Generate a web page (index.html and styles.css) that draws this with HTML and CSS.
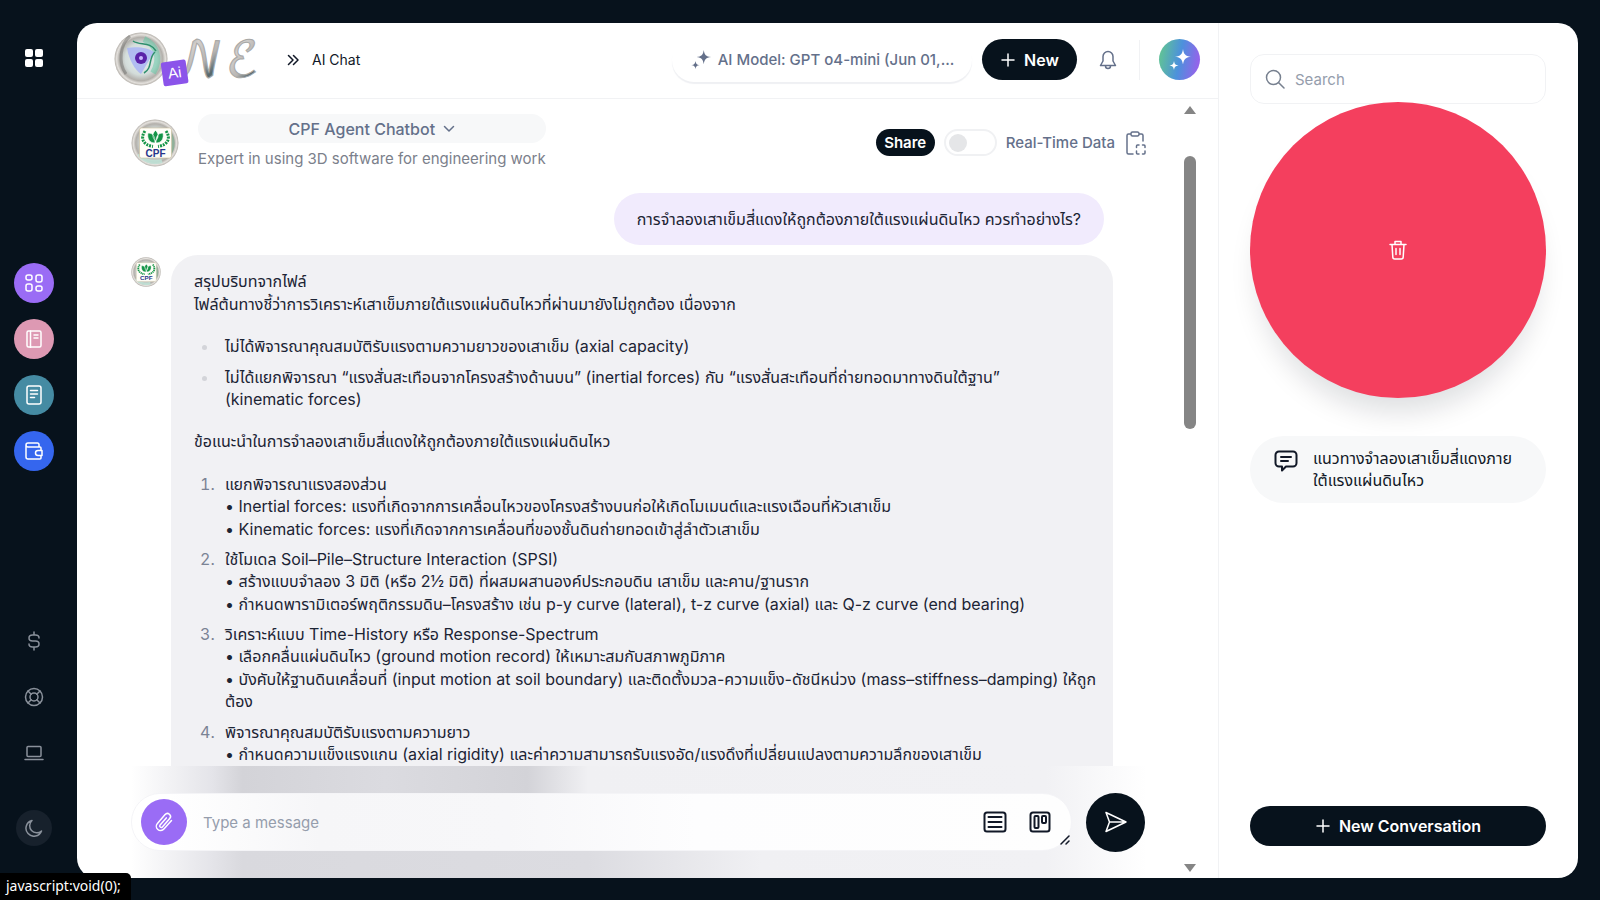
FILE: index.html
```html
<!DOCTYPE html>
<html lang="th">
<head>
<meta charset="utf-8">
<meta name="viewport" content="width=device-width, initial-scale=1">
<title>AI Chat</title>
<link rel="stylesheet" href="styles.css">
</head>
<body>
<svg class="defs" width="0" height="0" aria-hidden="true">
  <defs>
    <radialGradient id="pearl" cx="50%" cy="50%" r="50%">
      <stop offset="0" stop-color="#e9f4f0"/><stop offset=".6" stop-color="#d3dcda"/>
      <stop offset=".82" stop-color="#b3b0ab"/><stop offset=".92" stop-color="#e4e1dd"/><stop offset="1" stop-color="#b4b0aa"/>
    </radialGradient>
    <linearGradient id="silver" x1="0" y1="0" x2="1" y2="1">
      <stop offset="0" stop-color="#5f6d70"/><stop offset=".3" stop-color="#d3cfcc"/>
      <stop offset=".55" stop-color="#b9b6b3"/><stop offset=".75" stop-color="#56676b"/><stop offset="1" stop-color="#b9bcbb"/>
    </linearGradient>
    <symbol id="plus" viewBox="0 0 16 16"><path d="M8 2v12M2 8h12"/></symbol>
    <symbol id="sparkles" viewBox="0 0 24 24"><path fill="currentColor" stroke="none" d="M15 1c.9 5.500 2.200 6.900 8 7.800-5.800.9-7.100 2.300-8 7.800-.9-5.500-2.200-6.900-8-7.800 5.800-.9 7.100-2.300 8-7.800zM6 13c.6 3.200 1.400 4 4.600 4.500C7.400 18 6.600 18.800 6 22c-.6-3.200-1.400-4-4.600-4.500C4.600 17 5.400 16.200 6 13z"/></symbol>
    <symbol id="cpf" viewBox="0 0 48 48">
      <circle cx="24" cy="24" r="23.500" fill="url(#pearl)"/>
      <path d="M38 12c5 7 6 17 0 24" fill="none" stroke="#7fae8e" stroke-width="3" opacity=".7"/>
      <path d="M8 35c4 6 13 10 23 7" fill="none" stroke="#bfe6da" stroke-width="4" opacity=".8"/>
      <rect x="8.500" y="9" width="32" height="30" rx="2" fill="#fffef8" stroke="#c9bd9b" stroke-width=".6"/>
      <path d="M24.500 11.500c3.500 3 3.500 7 0 10.500-3.500-3.500-3.500-7.500 0-10.500zM17 14c5 0 7 3 7 10-6 0-8-5-7-10zM32 14c-5 0-7 3-7 10 6 0 8-5 7-10z" fill="#149447" stroke="#fff" stroke-width=".6"/>
      <path d="M14 12c-5 7-2 14 8 15.500M35 12c5 7 2 14-8 15.500" fill="none" stroke="#149447" stroke-width="3" stroke-dasharray="2 1"/>
      <text x="24.500" y="37.500" text-anchor="middle" class="cpf-text">CPF</text>
    </symbol>
  </defs>
</svg>

<div class="app">
  <nav class="rail" aria-label="Main">
    <button class="rail-btn apps" aria-label="Apps"><svg width="18" height="18" viewBox="0 0 18 18" fill="#fff"><rect width="8" height="8" rx="2"/><rect x="10" width="8" height="8" rx="2"/><rect y="10" width="8" height="8" rx="2"/><rect x="10" y="10" width="8" height="8" rx="2"/></svg></button>
    <div class="rail-group">
      <button class="rail-btn round violet" aria-label="Dashboard"><svg class="ico" width="18" height="18" viewBox="0 0 18 18"><rect x="1" y="1" width="6" height="5" rx="2"/><rect x="11" y="1" width="6" height="7" rx="2"/><rect x="1" y="10" width="6" height="7" rx="2"/><rect x="11" y="12" width="6" height="5" rx="2"/></svg></button>
      <button class="rail-btn round pink" aria-label="Notebook"><svg class="ico" width="18" height="18" viewBox="0 0 18 18"><rect x="2" y="1" width="14" height="16" rx="1.500"/><path d="M5.500 1v17M9 5h4M9 8h4"/></svg></button>
      <button class="rail-btn round teal" aria-label="Documents"><svg class="ico" width="18" height="20" viewBox="0 0 18 20"><rect x="2" y="1" width="14" height="18" rx="2"/><path d="M5.500 5.500h7M5.500 9h7M5.500 12.500h4"/></svg></button>
      <button class="rail-btn round blue" aria-label="Wallet"><svg class="ico" width="18" height="18" viewBox="0 0 18 18"><path d="M14 5V2.500A1.500 1.500 0 0 0 12.500 1H3a2 2 0 0 0 0 4h12a1 1 0 0 1 1 1v2.500M1 3v12a2 2 0 0 0 2 2h12a1 1 0 0 0 1-1v-2.500M17 8.500h-4a2.500 2.500 0 0 0 0 5h4z"/></svg></button>
    </div>
    <div class="rail-foot">
      <button class="rail-btn" aria-label="Pricing"><svg class="ico" width="20" height="20" viewBox="0 0 20 20"><path d="M10 1v3M10 16v3M15 7c0-2-1.500-3-3.500-3h-3C6.500 4 5 5 5 7s1.500 3 3.500 3h3c2 0 3.500 1 3.500 3s-1.500 3-3.500 3h-3C6.500 16 5 15 5 13"/></svg></button>
      <button class="rail-btn" aria-label="Support"><svg class="ico" width="20" height="20" viewBox="0 0 20 20"><circle cx="10" cy="10" r="8.500"/><circle cx="10" cy="10" r="4"/><path d="M4 4l3.200 3.200M16 4l-3.200 3.200M4 16l3.200-3.200M16 16l-3.200-3.200"/></svg></button>
      <button class="rail-btn" aria-label="Devices"><svg class="ico" width="20" height="20" viewBox="0 0 20 20"><rect x="3" y="3.500" width="14" height="10" rx="1"/><path d="M1 16.500h18"/></svg></button>
      <button class="rail-btn moon" aria-label="Dark mode"><svg class="ico" width="18" height="18" viewBox="0 0 18 18"><path d="M7 1.500A8 8 0 1 0 16.500 12 7 7 0 0 1 7 1.500z"/></svg></button>
    </div>
  </nav>

  <div class="panel">
    <div class="workspace">
      <header class="topbar">
        <a class="logo" href="#" aria-label="ONE Ai">
          <svg width="146" height="58" viewBox="0 0 146 58">
            <circle cx="28" cy="28" r="26.500" fill="url(#pearl)"/>
            <path d="M17 5c-10 8-12 27-4 38" fill="none" stroke="#6f706d" stroke-width="3" opacity=".5"/>
            <path d="M31 8c12 6 18 19 9 34" fill="none" stroke="#52c79f" stroke-width="6" opacity=".45"/>
            <path d="M14 17c10-2 22 0 27 4L28 43c-6-4-12-14-14-26z" fill="#a9b5f3" opacity=".85"/>
            <path d="M20 10c7 5 17 0 23 10M31 42c9-5 4-15 11-21" fill="none" stroke="#2e8f6d" stroke-width="1.500"/>
            <circle cx="28" cy="27" r="6" fill="#5a22a8"/><circle cx="28" cy="27" r="2" fill="#c9b6ff"/>
            <text x="57" y="45" class="logo-script">𝒩</text>
            <text x="113" y="45" class="logo-script">ℰ</text>
            <g transform="rotate(-8 61 41)"><rect x="49" y="30" width="25" height="24" rx="2" fill="#8b54ea"/><text x="61.500" y="47" text-anchor="middle" class="logo-ai">Ai</text></g>
          </svg>
        </a>
        <div class="crumb"><svg class="ico" width="12" height="12" viewBox="0 0 12 12"><path d="M1.500 1.500L6 6l-4.500 4.500M6.500 1.500L11 6l-4.500 4.500"/></svg><span>AI Chat</span></div>
        <div class="top-actions">
          <button class="model"><svg width="22" height="22"><use href="#sparkles"/></svg><span>AI Model: GPT o4-mini (Jun 01,...</span></button>
          <button class="dark new"><svg class="ico" width="16" height="16"><use href="#plus"/></svg>New</button>
          <button class="bell" aria-label="Notifications"><svg class="ico" width="18" height="20" viewBox="0 0 18 20"><path d="M9 1.500a5 5 0 0 0-5 5V11l-2.500 4.500h15L14 11V6.500a5 5 0 0 0-5-5zM6.500 16a2.500 2.500 0 0 0 5 0"/></svg></button>
          <button class="avatar" aria-label="Account"><svg width="24" height="24"><use href="#sparkles"/></svg></button>
        </div>
      </header>

      <div class="body">
        <main class="chat">
          <div class="agent">
            <svg class="agent-logo" width="48" height="48" role="img" aria-label="CPF"><use href="#cpf"/></svg>
            <div class="agent-info">
              <button class="agent-pick">CPF Agent Chatbot<svg class="ico" width="12" height="8" viewBox="0 0 12 8"><path d="M1.500 1.500L6 6l4.500-4.500"/></svg></button>
              <p class="agent-desc">Expert in using 3D software for engineering work</p>
            </div>
            <div class="agent-tools">
              <button class="dark share">Share</button>
              <label class="switch"><input type="checkbox" class="toggle"><span>Real-Time Data</span></label>
              <button class="clip" aria-label="Copy"><svg class="ico" width="22" height="26" viewBox="0 0 22 26"><path d="M6 4H3.500A1.500 1.500 0 0 0 2 5.500v17A1.500 1.500 0 0 0 3.500 24H8M14 4h2.500A1.500 1.500 0 0 1 18 5.500V11M6 3.500A1.500 1.500 0 0 1 7.500 2h5A1.500 1.500 0 0 1 14 3.500v1A1.500 1.500 0 0 1 12.500 6h-5A1.500 1.500 0 0 1 6 4.500z"/><path d="M11.500 17.500V16a1 1 0 0 1 1-1H14M17.500 15H19a1 1 0 0 1 1 1v1.500M20 21v2a1 1 0 0 1-1 1h-1.500M14 24h-1.500a1 1 0 0 1-1-1v-2"/></svg></button>
            </div>
          </div>

          <div class="messages">
            <div class="from-user">การจำลองเสาเข็มสี่แดงให้ถูกต้องภายใต้แรงแผ่นดินไหว ควรทำอย่างไร?</div>
            <div class="from-bot">
              <svg class="bot-logo" width="30" height="32" role="img" aria-label="CPF"><use href="#cpf"/></svg>
              <div class="bubble">
                <p>สรุปบริบทจากไฟล์<br>ไฟล์ต้นทางชี้ว่าการวิเคราะห์เสาเข็มภายใต้แรงแผ่นดินไหวที่ผ่านมายังไม่ถูกต้อง เนื่องจาก</p>
                <ul>
                  <li>ไม่ได้พิจารณาคุณสมบัติรับแรงตามความยาวของเสาเข็ม (axial capacity)</li>
                  <li>ไม่ได้แยกพิจารณา “แรงสั่นสะเทือนจากโครงสร้างด้านบน” (inertial forces) กับ “แรงสั่นสะเทือนที่ถ่ายทอดมาทางดินใต้ฐาน”<br>(kinematic forces)</li>
                </ul>
                <p>ข้อแนะนำในการจำลองเสาเข็มสี่แดงให้ถูกต้องภายใต้แรงแผ่นดินไหว</p>
                <ol>
                  <li>แยกพิจารณาแรงสองส่วน<br>• Inertial forces: แรงที่เกิดจากการเคลื่อนไหวของโครงสร้างบนก่อให้เกิดโมเมนต์และแรงเฉือนที่หัวเสาเข็ม<br>• Kinematic forces: แรงที่เกิดจากการเคลื่อนที่ของชั้นดินถ่ายทอดเข้าสู่ลำตัวเสาเข็ม</li>
                  <li>ใช้โมเดล Soil–Pile–Structure Interaction (SPSI)<br>• สร้างแบบจำลอง 3 มิติ (หรือ 2½ มิติ) ที่ผสมผสานองค์ประกอบดิน เสาเข็ม และคาน/ฐานราก<br>• กำหนดพารามิเตอร์พฤติกรรมดิน–โครงสร้าง เช่น p-y curve (lateral), t-z curve (axial) และ Q-z curve (end bearing)</li>
                  <li>วิเคราะห์แบบ Time-History หรือ Response-Spectrum<br>• เลือกคลื่นแผ่นดินไหว (ground motion record) ให้เหมาะสมกับสภาพภูมิภาค<br>• บังคับให้ฐานดินเคลื่อนที่ (input motion at soil boundary) และติดตั้งมวล-ความแข็ง-ดัชนีหน่วง (mass–stiffness–damping) ให้ถูก<br>ต้อง</li>
                  <li>พิจารณาคุณสมบัติรับแรงตามความยาว<br>• กำหนดความแข็งแรงแกน (axial rigidity) และค่าความสามารถรับแรงอัด/แรงดึงที่เปลี่ยนแปลงตามความลึกของเสาเข็ม</li>
                </ol>
              </div>
            </div>
          </div>

          <form class="composer">
            <div class="field">
              <button type="button" class="attach" aria-label="Attach file"><svg class="ico" width="20" height="22" viewBox="0 0 20 22"><path d="M17.500 9.500l-7.600 8.600a4.300 4.300 0 0 1-6.500-5.700l7.700-8.800a3 3 0 0 1 4.600 4l-7.300 8.300a1.500 1.500 0 0 1-2.300-2l6.200-7"/></svg></button>
              <input class="prompt" type="text" placeholder="Type a message" aria-label="Type a message">
              <button type="button" class="tool" aria-label="Prompts"><svg class="ico bold" width="24" height="22" viewBox="0 0 24 22"><rect x="1.500" y="1.500" width="21" height="19" rx="2.500"/><path d="M5.500 6h13M5.500 11h13M5.500 16h13"/></svg></button>
              <button type="button" class="tool" aria-label="Board"><svg class="ico bold" width="22" height="22" viewBox="0 0 22 22"><rect x="1.500" y="1.500" width="19" height="19" rx="2.500"/><rect x="5.500" y="5" width="4" height="12" rx="1"/><rect x="13" y="5" width="4" height="7" rx="1"/></svg></button>
              <svg class="ico grip" width="10" height="10" viewBox="0 0 10 10"><path d="M1 9l8-8M6 9l3-3"/></svg>
            </div>
            <button type="button" class="send" aria-label="Send"><svg class="ico" width="24" height="24" viewBox="0 0 24 24"><path d="M2 2.500L22 12 2 21.500 5.500 12zM5.500 12H22"/></svg></button>
          </form>
        </main>
        <div class="scrollbar" aria-hidden="true">
          <svg width="14" height="10" viewBox="0 0 14 10"><path d="M7 1l6 8H1z"/></svg>
          <div class="track"><div class="thumb"></div></div>
          <svg width="14" height="10" viewBox="0 0 14 10"><path d="M7 9l6-8H1z"/></svg>
        </div>
      </div>
    </div>

    <aside class="history">
      <label class="search"><svg class="ico" width="20" height="20" viewBox="0 0 20 20"><circle cx="8.500" cy="8.500" r="7"/><path d="M13.500 13.500L19 19"/></svg><input type="search" placeholder="Search" aria-label="Search"></label>
      <button class="delete" aria-label="Delete"><svg class="ico" width="18" height="20" viewBox="0 0 18 20"><path d="M1 4.500h16M6 4.500v-3h6v3M3 4.500l.8 12.500a2 2 0 0 0 2 2h6.400a2 2 0 0 0 2-2L15 4.500M7 8.500v6M11 8.500v6"/></svg></button>
      <a class="thread" href="#"><svg class="ico bold" width="24" height="22" viewBox="0 0 24 22"><path d="M5 1.500h14a3.500 3.500 0 0 1 3.500 3.500v8a3.500 3.500 0 0 1-3.500 3.500h-7L8 20.500v-4H5A3.500 3.500 0 0 1 1.500 13V5A3.500 3.500 0 0 1 5 1.500zM7 7h10M7 11h7"/></svg><span>แนวทางจำลองเสาเข็มสี่แดงภาย<br>ใต้แรงแผ่นดินไหว</span></a>
      <button class="dark new-conv"><svg class="ico" width="16" height="16"><use href="#plus"/></svg>New Conversation</button>
    </aside>
  </div>
</div>
<div class="status">javascript:void(0);</div>
</body>
</html>
```
FILE: styles.css
```css
* { box-sizing: border-box; }
body {
  margin: 0;
  background: #07121c;
  color: #111827;
  font-family: Inter, "Noto Sans Thai", "Noto Sans", sans-serif;
  font-size: 15px;
}
button, input { font: inherit; color: inherit; border: 0; background: none; padding: 0; margin: 0; }
button { display: inline-flex; align-items: center; justify-content: center; cursor: pointer; white-space: nowrap; }
input:focus { outline: none; }
p, ul, ol { margin: 0; }
a { color: inherit; text-decoration: none; }
svg { flex: none; display: block; }
.defs { position: absolute; }
.ico { fill: none; stroke: currentColor; stroke-width: 1.500; stroke-linecap: round; stroke-linejoin: round; }
.bold { stroke-width: 2; }
.dark { background: #07121c; color: #fff; border-radius: 24px; font-weight: 600; }

.app { display: flex; height: 100vh; padding: 23px 22px 22px 0; }
.rail { display: flex; flex-direction: column; align-items: center; width: 77px; padding: 15px 9px 32px 0; color: #8a919b; }
.rail-btn { width: 40px; height: 40px; border-radius: 50%; }
.rail-group { display: flex; flex-direction: column; gap: 16px; margin-top: 185px; color: #fff; }
.violet { background: #9a6cf5; }
.pink { background: #dd99b3; }
.teal { background: #458ba3; }
.blue { background: #3566ee; }
.rail-foot { display: flex; flex-direction: column; align-items: center; gap: 16px; margin-top: auto; }
.moon { margin-top: 21px; width: 36px; height: 36px; background: #17212c; }

.panel { flex: 1; min-width: 0; display: flex; background: #fff; border-radius: 20px; overflow: hidden; }
.workspace { flex: 1; min-width: 0; display: flex; flex-direction: column; }
.topbar { display: flex; align-items: center; height: 76px; padding: 0 18px 2px 36px; border-bottom: 1px solid #f1f2f4; flex: none; }
.logo svg { overflow: visible; }
.logo-script { font: 48px "DejaVu Math TeX Gyre", "DejaVu Serif", serif; fill: url(#silver); stroke: #a8a8a6; stroke-width: 1; }
.logo-ai { font: 15px "Liberation Sans", sans-serif; fill: #fff; }
.cpf-text { font: bold 10px "Liberation Sans", sans-serif; fill: #27358b; }
.crumb { display: flex; align-items: center; gap: 13px; margin-left: 28px; font-size: 14px; }
.top-actions { display: flex; align-items: center; margin-left: auto; color: #64708a; }
.model { gap: 6px; height: 44px; width: 300px; border-radius: 22px; font-weight: 500; box-shadow: 0 2px 1px #eff0f3; margin-right: 10px; }
.new { gap: 8px; width: 95px; height: 41px; font-size: 16px; }
.bell { width: 63px; height: 40px; border-right: 1px solid #f1f2f4; }
.avatar { width: 41px; height: 41px; margin-left: 19px; border-radius: 50%; color: #fff; background: linear-gradient(100deg, #5fbf9b 10%, #4c91dc 50%, #9364ea 90%); }

.body { flex: 1; min-height: 0; display: flex; }
.chat { flex: 1; min-width: 0; display: flex; flex-direction: column; }
.agent { display: flex; align-items: center; padding: 15px 23px 0 54px; color: #64708a; flex: none; }
.agent-info { display: flex; flex-direction: column; gap: 4px; margin-left: 19px; }
.agent-pick { gap: 8px; height: 29px; border-radius: 15px; background: #f7f8f9; font-size: 16px; font-weight: 500; }
.agent-desc { line-height: 24px; color: #7b808b; }
.agent-tools { display: flex; align-items: center; gap: 9px; margin-left: auto; }
.share { width: 59px; height: 27px; }
.switch { display: flex; align-items: center; gap: 9px; font-weight: 500; }
.toggle { appearance: none; display: flex; align-items: center; width: 53px; height: 27px; padding: 0 3px; border: 2px solid #f0f1f3; border-radius: 14px; }
.toggle::before { content: ""; width: 18px; height: 18px; border-radius: 50%; background: #e5e6e8; }
.clip { margin-left: 1px; }

.messages { flex: 1; min-height: 0; overflow: hidden; display: flex; flex-direction: column; padding: 22px 57px 0 54px; font-size: 16px; line-height: 1.4; color: #1c2434; }
.from-user { flex: none; align-self: flex-end; margin-right: 9px; padding: 15px 23px; border-radius: 27px; background: #f1ebfd; }
.from-bot { flex: none; display: flex; gap: 10px; margin-top: 10px; }
.bot-logo { margin-top: 1px; }
.bubble { flex: 1; min-width: 0; padding: 15px 23px 40px; border-radius: 27px; background: #f1f1f4; }
.bubble ul, .bubble ol { margin: 20px 0; padding-left: 25px; }
.bubble li + li { margin-top: 8px; }
.bubble li { padding-left: 6px; white-space: nowrap; }
.bubble li::marker { color: #7b8394; }
.bubble ul li::marker { color: #d3d4d9; }

.composer {
  flex: none; display: flex; align-items: center; gap: 14px; height: 112px; margin-left: 54px; margin-right: 23px;
  background:
    linear-gradient(90deg, #fff, #e4e4e9 8%, #d3d3d8 11%, #dbdbe0 25%, #d3d3d8 39%, #f0f0f3 45%, #f1f1f4 90%, #fff) top / 100% 50% no-repeat,
    linear-gradient(90deg, #fff, #e4e4e9 8%, #d9d9de 11%, #dcdce1 45%, #f0f0f3 62%, #f1f1f4 90%, #fff) bottom / 100% 50% no-repeat;
}
.field { flex: 1; min-width: 0; position: relative; display: flex; align-items: center; height: 58px; padding: 0 20px 0 9px; border: 1px solid #f4f4f7; border-radius: 29px; background: linear-gradient(90deg, #fff 4%, #f6f6f8 20%, #f7f7f9 40%, #fdfdfe 60%, #fefefe); }
.attach { width: 46px; height: 46px; border-radius: 50%; background: #9a6cf5; color: #fff; }
.prompt { flex: 1; min-width: 0; height: 40px; padding: 0 16px; }
.prompt::placeholder, .search input::placeholder { color: #959dac; opacity: 1; }
.tool { margin-left: 22px; }
.grip { position: absolute; right: 1px; bottom: 5px; }
.send { width: 59px; height: 59px; border-radius: 50%; background: #07121c; color: #fff; margin-right: 2px; }

.scrollbar { width: 48px; padding: 6px 21px 5px 13px; display: flex; flex-direction: column; align-items: center; fill: #858585; }
.track { flex: 1; width: 12px; padding: 41px 0; }
.thumb { height: 41%; border-radius: 6px; background: #858585; }

.history { width: 360px; display: flex; flex-direction: column; padding: 31px 32px 32px 31px; border-left: 1px solid #f1f2f4; }
.search { flex: none; display: flex; align-items: center; gap: 10px; height: 50px; padding: 0 14px; border: 1px solid #f1f2f4; border-radius: 14px; color: #77808f; }
.search input { flex: 1; min-width: 0; }
.delete { flex: none; width: 100%; aspect-ratio: 1; margin-top: -2px; border-radius: 50%; background: #f43f5e; color: #fff; box-shadow: 0 22px 28px -8px #07121c22; }
.thread { display: flex; gap: 15px; margin-top: 38px; padding: 11px 24px 12px; border-radius: 34px; background: #f7f8f9; font-size: 16px; line-height: 22px; white-space: nowrap; }
.thread svg { margin-top: 3px; }
.new-conv { gap: 8px; height: 40px; margin-top: auto; font-size: 16px; }

.status { position: fixed; left: 0; bottom: 0; padding: 3px 10px 4px 6px; border-radius: 0 5px 0 0; background: #000; color: #fff; font: 14px/20px "Noto Sans", sans-serif; }
```
